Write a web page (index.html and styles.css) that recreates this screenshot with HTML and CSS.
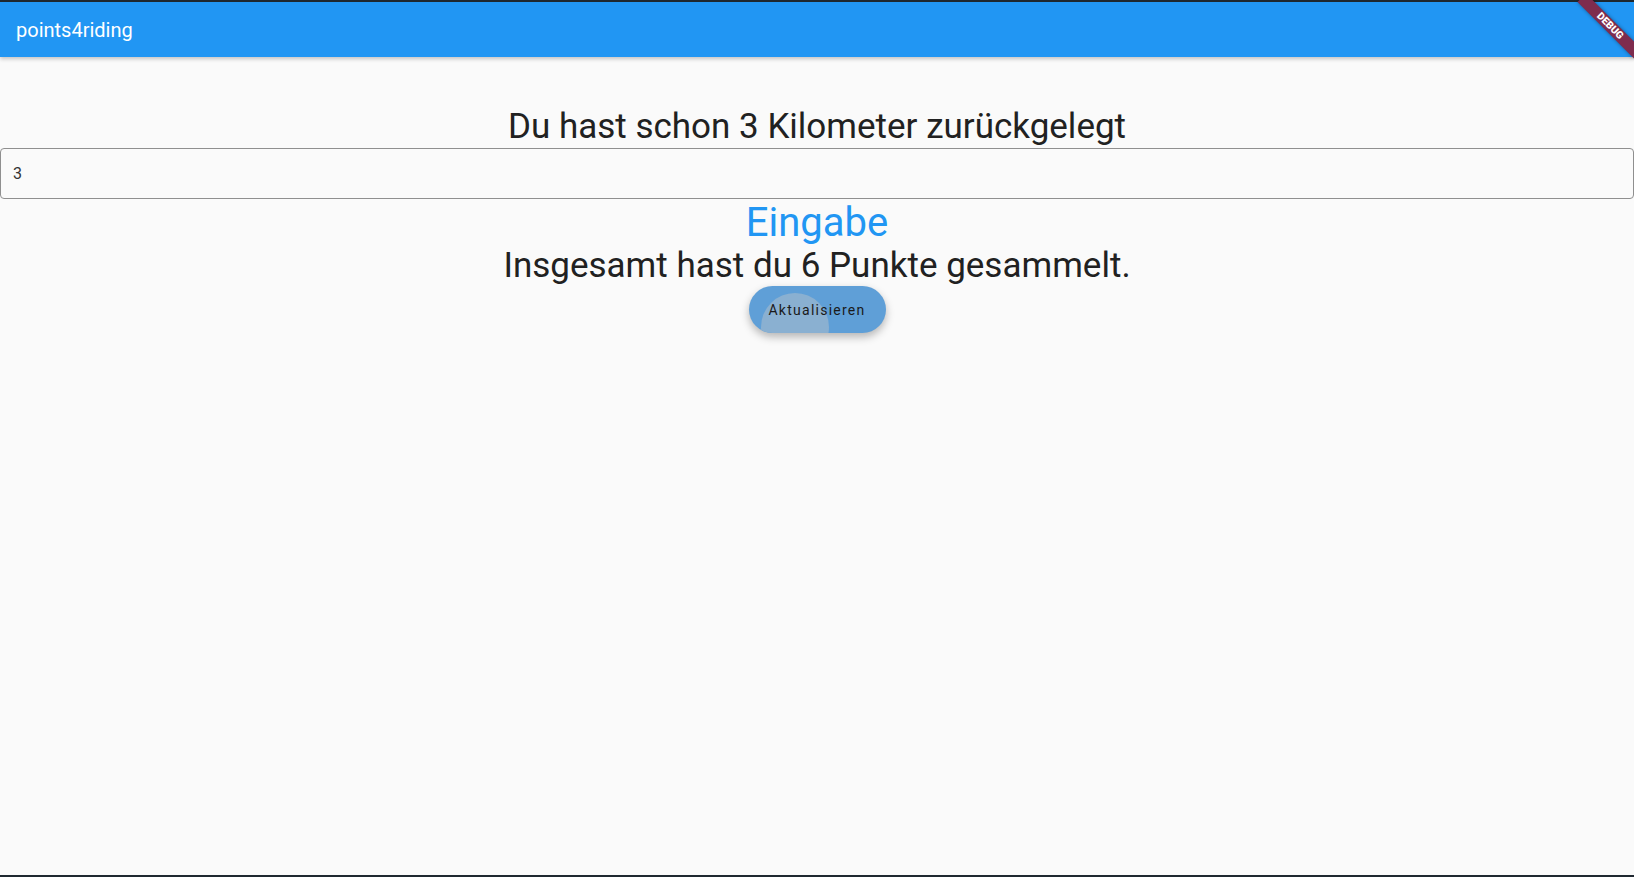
FILE: index.html
```html
<!DOCTYPE html>
<html lang="de">
<head>
<meta charset="utf-8">
<title>points4riding</title>
<link rel="stylesheet" href="styles.css">
</head>
<body>
<div class="app">
  <div class="edge"></div>
  <header class="appbar">
    <span class="title">points4riding</span>
  </header>
  <main class="content">
    <h1 class="headline">Du hast schon 3 Kilometer zurückgelegt</h1>
    <input class="field" type="text" value="3">
    <div class="link">Eingabe</div>
    <p class="total">Insgesamt hast du 6 Punkte gesammelt.</p>
    <button class="btn" type="button"><span class="ripple"></span><span class="btn-label">Aktualisieren</span></button>
  </main>
  <div class="edge"></div>
  <div class="banner">DEBUG</div>
</div>
</body>
</html>
```

FILE: styles.css
```css
* { box-sizing: border-box; }
html, body {
  margin: 0;
  padding: 0;
  height: 100%;
  overflow: hidden;
}
body {
  font-family: Roboto, "Liberation Sans", sans-serif;
  background: #fafafa;
}
.app {
  position: relative;
  height: 100vh;
  display: flex;
  flex-direction: column;
  overflow: hidden;
}
.edge {
  height: 2px;
  background: #1f2830;
  flex: none;
}
.appbar {
  flex: none;
  height: 55px;
  background: #2196f3;
  display: flex;
  align-items: center;
  padding-left: 16px;
  box-shadow: 0 2px 4px rgba(0,0,0,0.22);
  position: relative;
  z-index: 1;
}
.title {
  color: #fff;
  font-size: 20px;
  font-weight: 400;
}
.content {
  flex: 1;
  display: flex;
  flex-direction: column;
  align-items: center;
  padding-top: 49px;
}
.headline {
  margin: 0;
  font-size: 35px;
  font-weight: 400;
  color: #212121;
  line-height: 42px;
}
.field {
  width: 100%;
  height: 51px;
  margin: 0;
  border: 1px solid #8f8f8f;
  border-radius: 4px;
  background: transparent;
  padding: 0 12px;
  font-family: Roboto, "Liberation Sans", sans-serif;
  font-size: 16px;
  color: #333;
  outline: none;
}
.link {
  font-size: 40px;
  line-height: 47px;
  color: #2196f3;
}
.total {
  margin: 0;
  font-size: 35px;
  line-height: 40px;
  color: #212121;
}
.btn {
  position: relative;
  overflow: hidden;
  margin-top: 0;
  width: 137px;
  height: 47px;
  border: none;
  border-radius: 24px;
  background: #5f9fd7;
  box-shadow: 0 4px 8px rgba(0,0,0,0.28);
  font-family: Roboto, "Liberation Sans", sans-serif;
  font-size: 14px;
  letter-spacing: 1.25px;
  color: #1a1a1a;
  padding: 0;
  display: flex;
  align-items: center;
  justify-content: center;
}
.ripple {
  position: absolute;
  left: 12px;
  top: 7px;
  width: 68px;
  height: 68px;
  border-radius: 50%;
  background: #8ab0d1;
}
.btn-label {
  position: relative;
}
.banner {
  position: absolute;
  top: 20px;
  right: -16px;
  width: 80px;
  height: 12px;
  background: #7e2c4e;
  color: #fff;
  font-family: Roboto, "Liberation Sans", sans-serif;
  font-size: 10.2px;
  font-weight: 900;
  line-height: 12px;
  text-align: center;
  transform: rotate(45deg);
  box-shadow: 0 0 4px rgba(0,0,0,0.4);
  z-index: 2;
}
```
